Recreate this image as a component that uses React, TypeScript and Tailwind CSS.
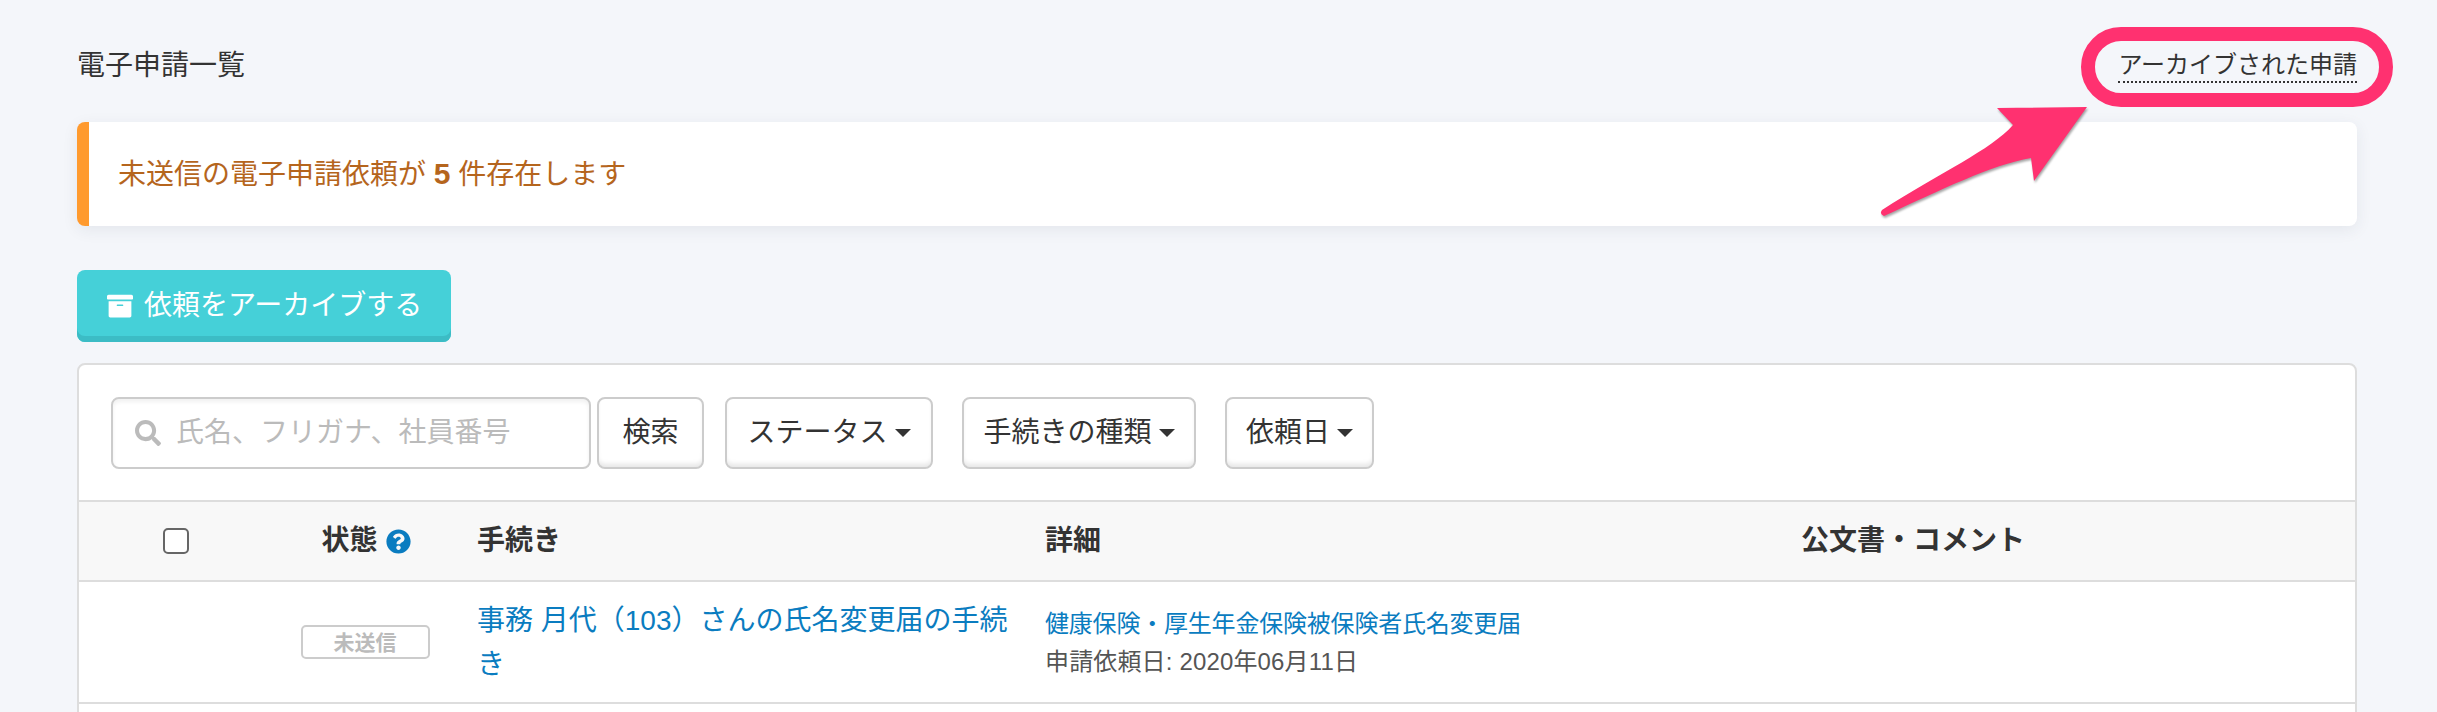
import { FaArchive, FaQuestionCircle, FaSearch } from 'react-icons/fa';

const filters = [
  { label: 'ステータス', width: 'w-[208px]' },
  { label: '手続きの種類', width: 'w-[234px]' },
  { label: '依頼日', width: 'w-[149px]' },
];

const columns = 'grid grid-cols-[194px_184px_568px_758px_1fr]';

function Caret() {
  return <span className="ml-[7px] h-0 w-0 border-x-[8px] border-t-[8px] border-x-transparent border-t-[#333]" />;
}

function FilterButton({ label, width }: { label: string; width: string }) {
  return (
    <button
      type="button"
      className={`${width} flex h-[72px] items-center justify-center rounded-lg border-2 border-[#ccc] bg-white text-[28px] text-[#333] shadow-[inset_0_-5px_5px_-2px_rgba(0,0,0,0.1)]`}
    >
      {label}
      <Caret />
    </button>
  );
}

export default function App() {
  return (
    <div
      className="h-[712px] w-[2437px] overflow-hidden bg-[#f4f6fa] pl-[77px] pr-[80px] pt-[45px] text-[#333]"
      style={{ fontFamily: '"Liberation Sans", "Noto Sans CJK JP", sans-serif' }}
    >
      <header className="flex h-[42px] items-center justify-between">
        <h1 className="text-[28px] font-normal leading-[42px]">電子申請一覧</h1>
        <div className="relative">
          <a className="block border-b-2 border-dotted border-[#333] text-[24px] leading-[32px] text-[#333]">
            アーカイブされた申請
          </a>
          {/* annotation drawn over the page */}
          <span className="absolute left-[-37px] top-[-22px] h-[80px] w-[312px] rounded-full border-[14px] border-[#ff3170]" />
          <svg
            className="absolute left-[-242px] top-[56px] drop-shadow-[1px_2px_1px_rgba(0,0,0,0.35)]"
            width="220"
            height="120"
            viewBox="1875 105 220 120"
          >
            <path
              d="M2086 107 L1996 108 L2012 125 C1990 150 1940 172 1881 210 Q1878 214 1883 216 C1940 190 1990 165 2030 158 L2033 181 Z"
              fill="#ff3170"
            />
          </svg>
        </div>
      </header>

      <div className="mt-[35px] flex h-[104px] items-center rounded-lg border-l-[12px] border-[#ff9a2e] bg-white pl-[29px] pt-[2px] text-[28px] text-[#b5651d] shadow-[0_4px_16px_rgba(40,50,80,0.08)]">
        <p>
          未送信の電子申請依頼が <strong className="text-[30px] font-bold leading-none">5</strong> 件存在します
        </p>
      </div>

      <button
        type="button"
        className="mt-[44px] flex h-[72px] w-[374px] items-center rounded-lg bg-[#45d0d8] pl-[30px] text-[28px] text-white shadow-[inset_0_-6px_0_#3cbcc5]"
      >
        <FaArchive className="mr-[11px] h-[26px] w-[26px]" />
        依頼をアーカイブする
      </button>

      <section className="mt-[21px] h-[400px] rounded-t-lg border-2 border-[#ddd] bg-white">
        <div className="flex h-[135px] items-center pl-[32px]">
          <label className="flex h-[72px] w-[480px] items-center rounded-lg border-2 border-[#ccc] bg-white pl-[22px] shadow-[inset_0_3px_4px_rgba(0,0,0,0.06)]">
            <FaSearch className="h-[26px] w-[26px] shrink-0 text-[#bbb]" />
            <input
              className="ml-[15px] w-full bg-transparent text-[28px] outline-none placeholder:text-[#bbb]"
              placeholder="氏名、フリガナ、社員番号"
            />
          </label>
          <button
            type="button"
            className="ml-[6px] h-[72px] w-[107px] rounded-lg border-2 border-[#ccc] bg-white text-[28px] text-[#333] shadow-[inset_0_-5px_5px_-2px_rgba(0,0,0,0.1)]"
          >
            検索
          </button>
          <div className="ml-[21px] flex gap-[29px]">
            {filters.map((filter) => (
              <FilterButton key={filter.label} label={filter.label} width={filter.width} />
            ))}
          </div>
        </div>

        <div className={`${columns} h-[82px] items-center border-y-2 border-[#ddd] bg-[#f8f8f8] text-[28px] font-bold`}>
          <div className="flex justify-center">
            <input
              type="checkbox"
              className="h-[26px] w-[26px] appearance-none rounded-[5px] border-2 border-[#666] bg-white"
            />
          </div>
          <div className="flex items-center justify-center pl-[2px]">
            状態
            <FaQuestionCircle className="ml-[8px] h-[25px] w-[25px] text-[#0a7cc0]" />
          </div>
          <div className="pl-[20px]">手続き</div>
          <div className="pl-[20px]">詳細</div>
          <div className="pl-[18px]">公文書・コメント</div>
        </div>

        <div className={`${columns} h-[122px] items-center border-b-2 border-[#ddd] pt-[2px]`}>
          <div />
          <div className="flex justify-center">
            <span className="-mt-[2px] flex h-[34px] w-[129px] items-center justify-center rounded-[5px] border-2 border-[#ccc] text-[21px] font-bold leading-none text-[#bbb]">
              未送信
            </span>
          </div>
          <a className="pl-[20px] pr-[14px] text-[28px] leading-[44px] text-[#0a7cc0]">
            事務 月代（103）さんの氏名変更届の手続き
          </a>
          <div className="pl-[20px] text-[24px] leading-[38px]">
            <a className="block whitespace-nowrap tracking-[-0.2px] text-[#0a7cc0]">健康保険・厚生年金保険被保険者氏名変更届</a>
            <p className="tracking-[0.15px] text-[#555]">申請依頼日: 2020年06月11日</p>
          </div>
          <div />
        </div>
      </section>
    </div>
  );
}
